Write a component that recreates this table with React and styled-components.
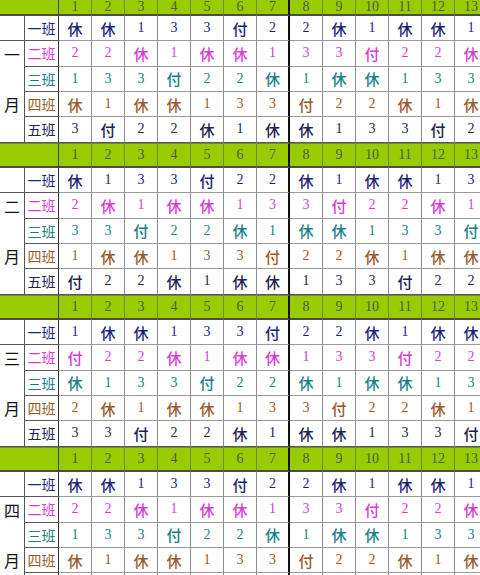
import styled, { createGlobalStyle } from "styled-components";

const GlobalStyle = createGlobalStyle`
  html, body {
    margin: 0;
    padding: 0;
    background: #ffffff;
  }
`

const ROW = "25.33px"
const DAYS = Array.from({ length: 13 }, (_, i) => i + 1)

const CLASSES = [
  { name: "一班", color: "#1d1d7a" },
  { name: "二班", color: "#d83cd2" },
  { name: "三班", color: "#178282" },
  { name: "四班", color: "#99592a" },
  { name: "五班", color: "#22224c" },
]

const MONTHS = [
  {
    label: "一",
    rows: [
      "休 休 1 3 3 付 2 2 休 1 休 休 1",
      "2 2 休 1 休 休 1 3 3 付 2 2 休",
      "1 3 3 付 2 2 休 1 休 休 1 3 3",
      "休 1 休 休 1 3 3 付 2 2 休 1 休",
      "3 付 2 2 休 1 休 休 1 3 3 付 2",
    ],
  },
  {
    label: "二",
    rows: [
      "休 1 3 3 付 2 2 休 1 休 休 1 3",
      "2 休 1 休 休 1 3 3 付 2 2 休 1",
      "3 3 付 2 2 休 1 休 休 1 3 3 付",
      "1 休 休 1 3 3 付 2 2 休 1 休 休",
      "付 2 2 休 1 休 休 1 3 3 付 2 2",
    ],
  },
  {
    label: "三",
    rows: [
      "1 休 休 1 3 3 付 2 2 休 1 休 休",
      "付 2 2 休 1 休 休 1 3 3 付 2 2",
      "休 1 3 3 付 2 2 休 1 休 休 1 3",
      "2 休 1 休 休 1 3 3 付 2 2 休 1",
      "3 3 付 2 2 休 1 休 休 1 3 3 付",
    ],
  },
  {
    label: "四",
    rows: [
      "休 休 1 3 3 付 2 2 休 1 休 休 1",
      "2 2 休 1 休 休 1 3 3 付 2 2 休",
      "1 3 3 付 2 2 休 1 休 休 1 3 3",
      "休 1 休 休 1 3 3 付 2 2 休 1 休",
      "3 付 2 2 休 1 休 休 1 3 3 付 2",
    ],
  },
]

const Sheet = styled.div`
  width: 480px;
  height: 575px;
  overflow: hidden;
  background: #fff;
`

const Blocks = styled.div`
  width: 488px;
`

const Block = styled.div`
  display: grid;
  grid-template-columns: 25px 34px repeat(13, 33px);
  grid-template-rows: ${p => (p.$first ? "16px" : ROW)};
  grid-auto-rows: ${ROW};
`

const HeadCorner = styled.div`
  grid-column: span 2;
  background: #99cc00;
  border-right: 1px solid #3c4a1a;
  border-bottom: 2px solid #4a4f44;
  border-top: ${p => (p.$first ? "none" : "1px solid #6f8a3a")};
  box-sizing: border-box;
`

const HeadDay = styled.div`
  background: #99cc00;
  border-right: ${p => (p.$thick ? "2px solid #111" : "1px solid #6f8a3a")};
  border-bottom: 2px solid #4a4f44;
  border-top: ${p => (p.$first ? "none" : "1px solid #6f8a3a")};
  box-sizing: border-box;
  display: flex;
  align-items: center;
  justify-content: center;
  font-family: "Liberation Serif", serif;
  font-size: 14px;
  line-height: 1;
  color: #4f5b3a;
`

const MonthTop = styled.div`
  grid-column: 1;
  border-right: 1px solid #555;
  border-bottom: 1px solid #555;
  box-sizing: border-box;
`

const MonthCell = styled.div`
  grid-column: 1;
  grid-row: span 4;
  display: grid;
  grid-template-rows: repeat(4, 1fr);
  border-right: 1px solid #555;
  border-bottom: 1px solid #555;
  box-sizing: border-box;
  font-family: "Noto Sans CJK SC", sans-serif;
  font-size: 16px;
  color: #111;
`

const MonthChar = styled.span`
  grid-row: ${p => p.$row};
  display: flex;
  align-items: center;
  justify-content: center;
`

const Label = styled.div`
  grid-column: 2;
  border-right: 1px solid #333;
  border-bottom: 1px solid #5a5a5a;
  box-sizing: border-box;
  display: flex;
  align-items: center;
  justify-content: center;
  font-family: "Noto Sans CJK SC", sans-serif;
  font-size: 14px;
  color: ${p => p.$color};
`

const Cell = styled.div`
  border-right: ${p => (p.$thick ? "2px solid #111" : "1px solid #8c8c8c")};
  border-bottom: 1px solid ${p => (p.$last ? "#555" : "#9a9a9a")};
  box-sizing: border-box;
  display: flex;
  align-items: center;
  justify-content: center;
  color: ${p => p.$color};
  font-family: ${p =>
    p.$cjk ? '"Noto Sans CJK SC", sans-serif' : '"Liberation Serif", serif'};
  font-size: ${p => (p.$cjk ? "15px" : "14px")};
  font-weight: ${p => (p.$cjk ? 500 : 400)};
`

function MonthBlock({ month, first }) {
  return (
    <Block $first={first}>
      <HeadCorner $first={first} />
      {DAYS.map(d => (
        <HeadDay key={d} $thick={d === 7} $first={first}>{d}</HeadDay>
      ))}
      {month.rows.map((row, r) => {
        const cls = CLASSES[r]
        const values = row.split(" ")
        return [
          r === 0 && <MonthTop key={"mt" + r} />,
          r === 1 && (
            <MonthCell key={"m" + r}>
              <MonthChar $row={1}>{month.label}</MonthChar>
              <MonthChar $row={3}>月</MonthChar>
            </MonthCell>
          ),
          <Label key={"l" + r} $color={cls.color}>{cls.name}</Label>,
          ...values.map((v, i) => (
            <Cell
              key={r + "-" + i}
              $color={cls.color}
              $cjk={isNaN(Number(v))}
              $thick={i === 6}
              $last={r === 4}
            >
              {v}
            </Cell>
          )),
        ]
      })}
    </Block>
  )
}

export default function App() {
  return (
    <>
      <GlobalStyle />
      <Sheet>
        <Blocks>
          {MONTHS.map((m, i) => (
            <MonthBlock key={m.label} month={m} first={i === 0} />
          ))}
        </Blocks>
      </Sheet>
    </>
  )
}
